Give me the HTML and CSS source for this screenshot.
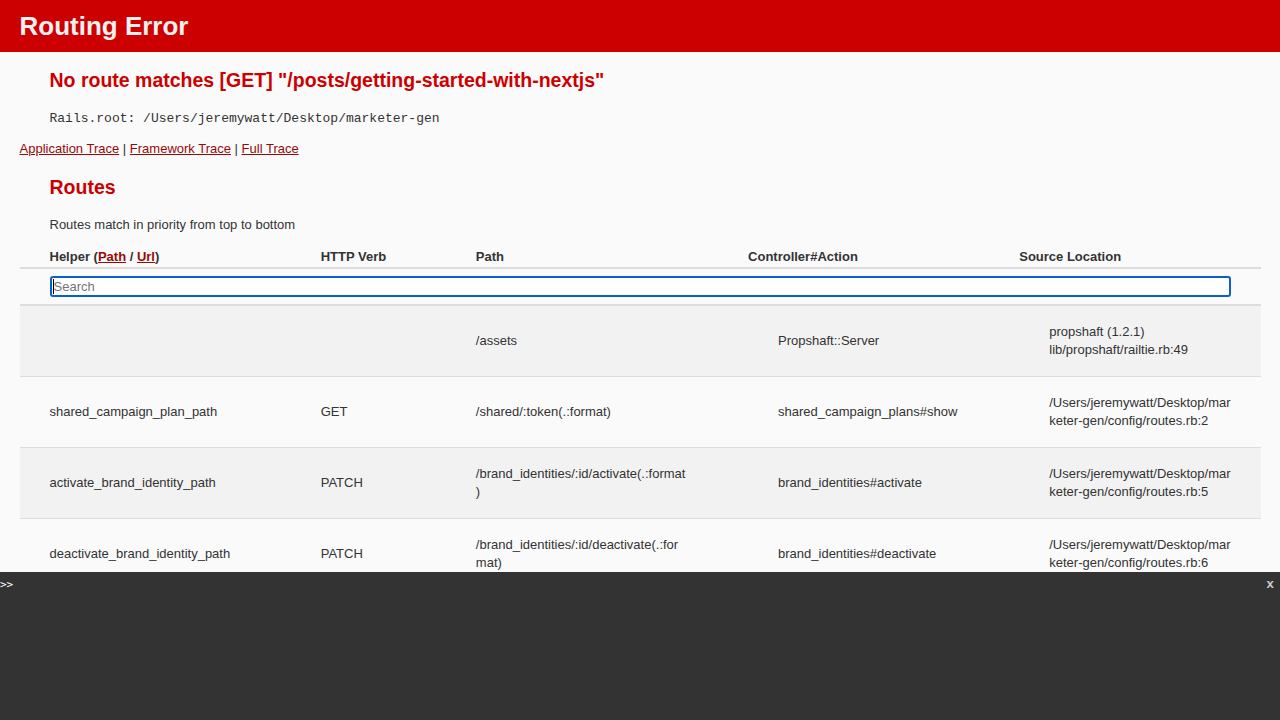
FILE: index.html
```html
<!DOCTYPE html>
<html lang="en">
<head>
<meta charset="utf-8">
<title>Action Controller: Exception caught</title>
<link rel="stylesheet" href="styles.css">
</head>
<body>
<header class="banner">
  <h1>Routing Error</h1>
</header>
<main class="container">
  <h2>No route matches [GET] "/posts/getting-started-with-nextjs"</h2>
  <p class="root-line"><code>Rails.root: /Users/jeremywatt/Desktop/marketer-gen</code></p>
  <div class="traces">
    <a href="#">Application Trace</a> |
    <a href="#">Framework Trace</a> |
    <a href="#">Full Trace</a>
  </div>

  <h2 class="routes-title">Routes</h2>
  <p>Routes match in priority from top to bottom</p>

  <table class="route-table">
    <colgroup>
      <col class="col-helper">
      <col class="col-verb">
      <col class="col-path">
      <col class="col-action">
      <col class="col-source">
    </colgroup>
    <thead>
      <tr>
        <th>Helper (<a href="#">Path</a> / <a href="#">Url</a>)</th>
        <th>HTTP Verb</th>
        <th>Path</th>
        <th>Controller#Action</th>
        <th>Source Location</th>
      </tr>
      <tr class="bottom">
        <th colspan="5"><input class="search" type="search" placeholder="Search"><span class="caret"></span></th>
      </tr>
    </thead>
    <tbody>
      <tr>
        <td></td>
        <td></td>
        <td>/assets</td>
        <td><p>Propshaft::Server</p></td>
        <td class="source"><p>propshaft (1.2.1)<br>lib/propshaft/railtie.rb:49</p></td>
      </tr>
      <tr>
        <td>shared_campaign_plan_path</td>
        <td>GET</td>
        <td>/shared/:token(.:format)</td>
        <td><p>shared_campaign_plans#show</p></td>
        <td class="source"><p>/Users/jeremywatt/Desktop/marketer-gen/config/routes.rb:2</p></td>
      </tr>
      <tr>
        <td>activate_brand_identity_path</td>
        <td>PATCH</td>
        <td>/brand_identities/:id/activate(.:format)</td>
        <td><p>brand_identities#activate</p></td>
        <td class="source"><p>/Users/jeremywatt/Desktop/marketer-gen/config/routes.rb:5</p></td>
      </tr>
      <tr>
        <td>deactivate_brand_identity_path</td>
        <td>PATCH</td>
        <td>/brand_identities/:id/deactivate(.:format)</td>
        <td><p>brand_identities#deactivate</p></td>
        <td class="source"><p>/Users/jeremywatt/Desktop/marketer-gen/config/routes.rb:6</p></td>
      </tr>
      <tr>
        <td>brand_identities_path</td>
        <td>GET</td>
        <td>/brand_identities(.:format)</td>
        <td><p>brand_identities#index</p></td>
        <td class="source"><p>/Users/jeremywatt/Desktop/marketer-gen/config/routes.rb:7</p></td>
      </tr>
    </tbody>
  </table>
</main>

<div class="console">
  <div class="console-bar">
    <span class="prompt">&gt;&gt;</span>
    <span class="close-button">x</span>
  </div>
</div>
</body>
</html>
```

FILE: styles.css
```css
body {
  background-color: #FAFAFA;
  color: #333;
  margin: 0;
}

body, p, td, th {
  font-family: "Liberation Sans", Arial, Helvetica, sans-serif;
  font-size: 13px;
  line-height: 18px;
}

.banner {
  color: #F0F0F0;
  background: #C00;
  padding: 6.5px 19.5px;
}

.banner h1 {
  margin: 5.2px 0;
  line-height: 28.6px;
  font-size: 26px;
  font-weight: bold;
}

.container {
  box-sizing: border-box;
  width: 100%;
  padding: 0 19.5px;
}

h2 {
  color: #C00;
  font-size: 19.5px;
  line-height: 25px;
  margin: 16.2px 0;
  padding-left: 30px;
}

.routes-title {
  margin-top: 16.2px;
}

p {
  margin: 13px 0;
  padding-left: 30px;
}

.root-line {
  height: 18px;
}

code {
  font-family: "Liberation Mono", "Courier New", monospace;
  font-size: 13px;
  line-height: 1;
}

a {
  color: #980905;
}

.traces {
  line-height: 18px;
}

.route-table {
  margin: 0;
  border-collapse: collapse;
  overflow-wrap: break-word;
  table-layout: fixed;
  width: 100%;
}

.col-helper { width: 271px; }
.col-verb { width: 155px; }
.col-path { width: 272px; }
.col-action { width: 271px; }
.col-source { width: 271px; }

.route-table thead tr {
  border-bottom: 2px solid #ddd;
}

.route-table th {
  padding: 1px 0 1px 30px;
  text-align: left;
  font-weight: bold;
}

.route-table tr.bottom th {
  padding: 7px 30px 7px 30px;
  line-height: 15px;
  position: relative;
}

.search {
  display: block;
  box-sizing: border-box;
  width: 100%;
  height: 21px;
  margin: 0;
  padding: 1px 2px;
  border: 2px solid #0b5fcc;
  border-radius: 3px;
  background: #fff;
  font-family: "Liberation Sans", Arial, sans-serif;
  font-size: 13px;
  color: #333;
  outline: none;
  -webkit-appearance: textfield;
  appearance: textfield;
}

.search::placeholder {
  color: #757575;
}

.caret {
  position: absolute;
  left: 33px;
  top: 10px;
  width: 1px;
  height: 15px;
  background: #000;
}

.route-table tbody tr {
  border-bottom: 1px solid #ddd;
}

.route-table tbody tr:nth-child(odd) {
  background: #f2f2f2;
}

.route-table td {
  padding: 4px 30px;
  vertical-align: middle;
}

.route-table td.source {
  padding-right: 24px;
}

.console {
  position: fixed;
  left: 0;
  right: 0;
  bottom: 0;
  height: 148px;
  background: #333;
  z-index: 10;
}

.console-bar {
  display: flex;
  justify-content: space-between;
  align-items: center;
  padding: 5px 6px 0 0;
}

.prompt {
  color: #fff;
  font-family: "DejaVu Sans Mono", monospace;
  font-size: 11px;
  line-height: 14px;
  margin-top: 1px;
}

.close-button {
  color: #ccc;
  font-family: "Liberation Mono", monospace;
  font-size: 13px;
  line-height: 14px;
  font-weight: bold;
}
```
